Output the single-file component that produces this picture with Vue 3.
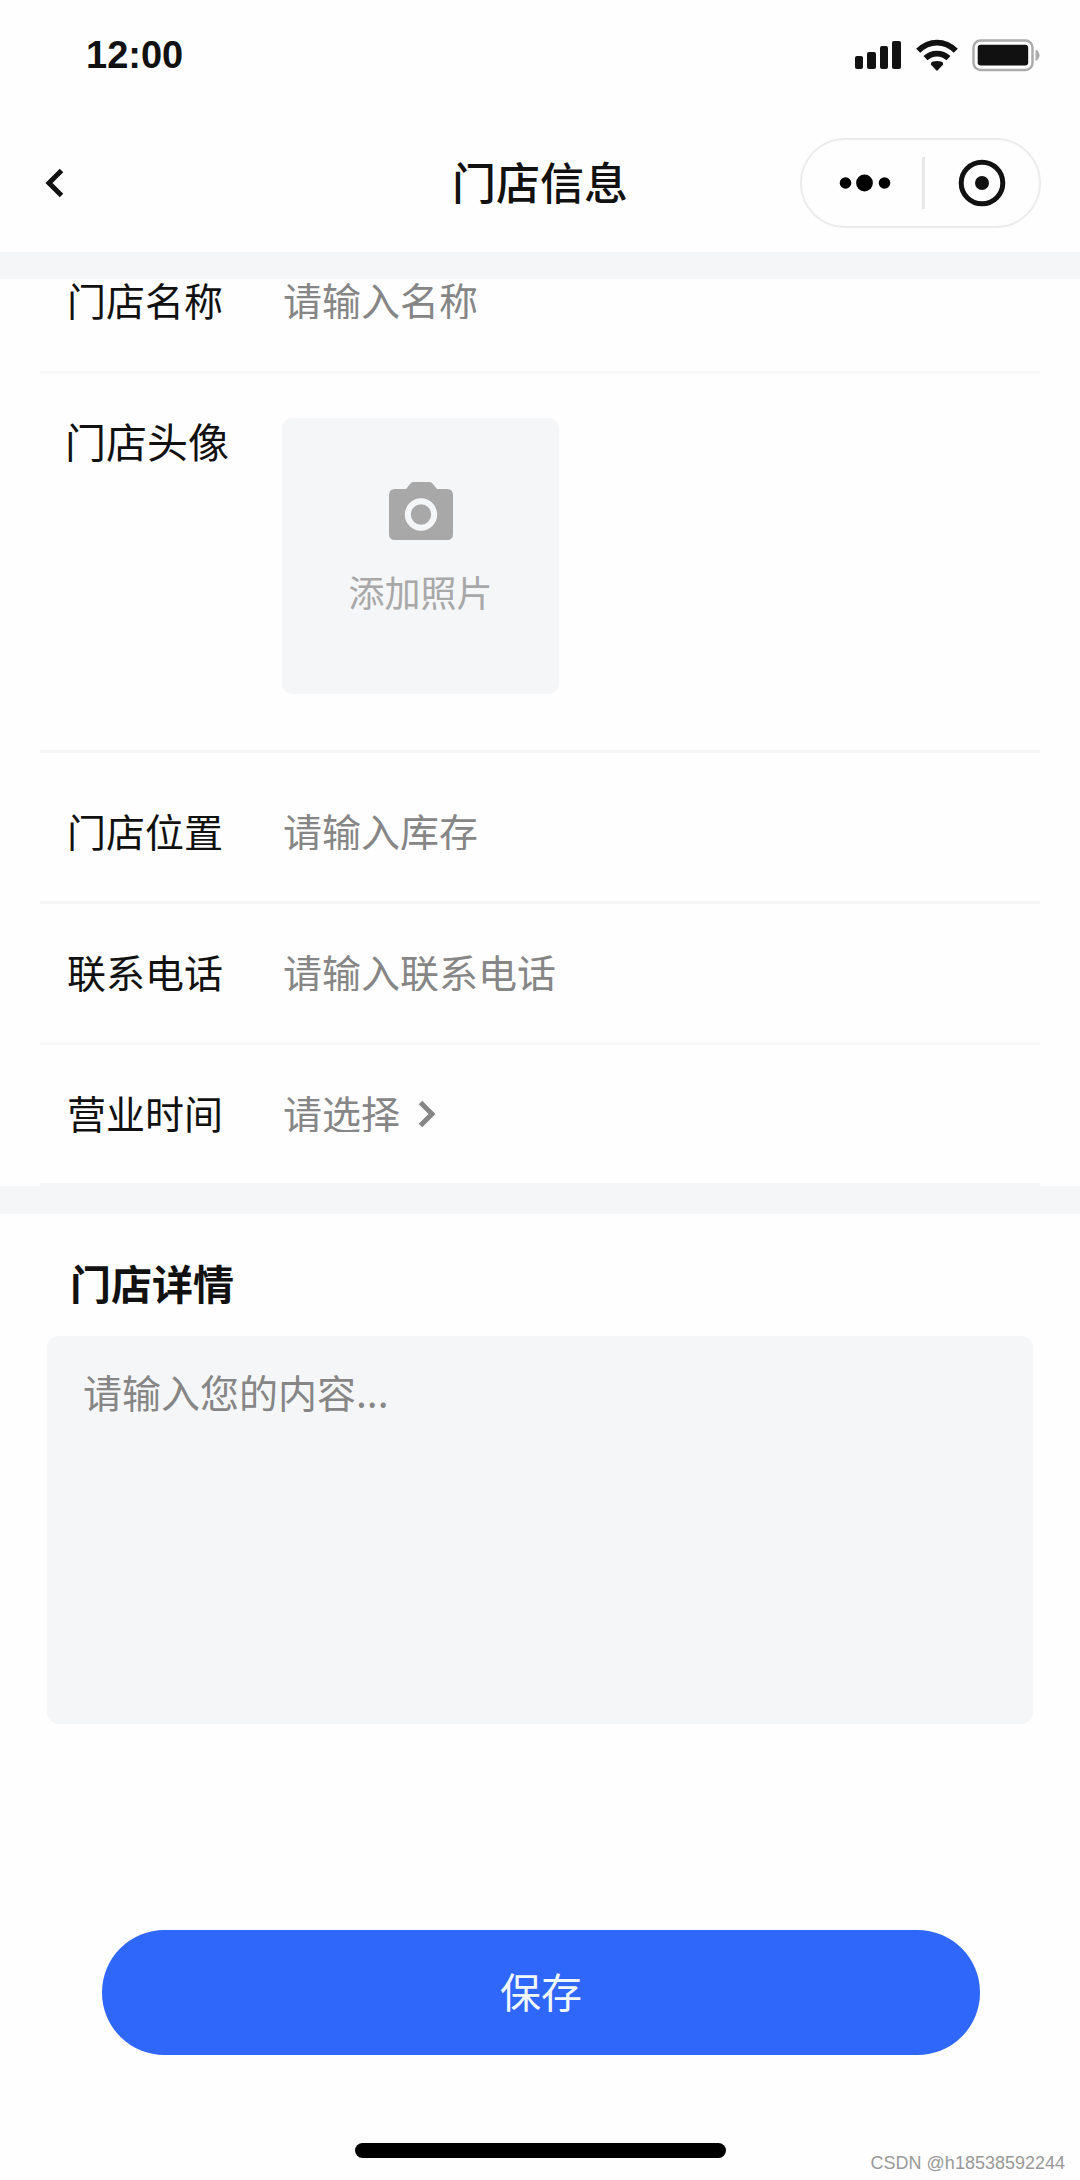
<script setup>
import { reactive } from 'vue'

const form = reactive({
  name: '',
  location: '',
  phone: '',
  hours: '',
  detail: '',
})
</script>

<template>
  <div class="page">
    <div class="status-bar">
      <span class="time">12:00</span>
      <svg class="status-icons" width="186" height="36" viewBox="0 0 186 36" aria-hidden="true">
        <g fill="#111">
          <rect x="1" y="19" width="8" height="13" rx="2" />
          <rect x="13" y="15" width="9" height="17" rx="2" />
          <rect x="26" y="9" width="8" height="23" rx="2" />
          <rect x="38" y="4" width="9" height="28" rx="2" />
          <path d="M83 34 L76.800 27.500 Q76.600 25 79 24.400 Q83 23.400 87 24.400 Q89.400 25 89.200 27.500 Z" />
        </g>
        <g fill="none" stroke="#111" stroke-width="5.800">
          <path d="M64.200 13.800 Q72.500 5.600 83 5.600 Q93.500 5.600 101.800 13.800" />
          <path d="M71.500 21.200 Q76.500 16.600 83 16.600 Q89.500 16.600 94.500 21.200" />
        </g>
        <rect x="119.500" y="3.500" width="59" height="29.500" rx="7" fill="none" stroke="#acacac" stroke-width="2.500" />
        <rect x="123.700" y="7.800" width="50.500" height="20.700" rx="3" fill="#111" />
        <path d="M181.500 12.500 Q185.500 14.500 185.500 18.200 Q185.500 22 181.500 24 Z" fill="#acacac" />
      </svg>
    </div>

    <header class="nav">
      <button class="back" type="button" aria-label="返回">
        <svg width="20" height="30" viewBox="0 0 20 30" aria-hidden="true">
          <path d="M16.500 2.500 L4 15 L16.500 27.500" fill="none" stroke="#111" stroke-width="5" />
        </svg>
      </button>
      <h1 class="title">门店信息</h1>
      <div class="capsule">
        <button class="more" type="button" aria-label="更多">
          <svg width="52" height="18" viewBox="0 0 52 18" aria-hidden="true">
            <circle cx="6.500" cy="9" r="5.800" />
            <circle cx="25.500" cy="9" r="8.400" />
            <circle cx="45.500" cy="9" r="5.800" />
          </svg>
        </button>
        <span class="divider"></span>
        <button type="button" aria-label="关闭">
          <svg width="48" height="48" viewBox="0 0 48 48" aria-hidden="true">
            <circle cx="24" cy="24" r="20.800" fill="none" stroke="#111" stroke-width="5" />
            <circle cx="24" cy="24" r="7" fill="#111" />
          </svg>
        </button>
      </div>
    </header>

    <form @submit.prevent>
      <section class="fields">
        <div class="row row-first">
          <label for="name">门店名称</label>
          <input id="name" v-model="form.name" type="text" placeholder="请输入名称" />
        </div>
        <div class="row row-photo">
          <span class="photo-label">门店头像</span>
          <button class="photo" type="button">
            <svg width="64" height="58" viewBox="0 0 64 58" aria-hidden="true">
              <path d="M6 7 H17 L21.500 1.500 Q22.500 0 24.500 0 H40.500 Q42.500 0 43.500 1.500 L48 7 H58 Q64 7 64 13 V52 Q64 58 58 58 H6 Q0 58 0 52 V13 Q0 7 6 7 Z" fill="#a8a8a8" />
              <circle cx="32" cy="32.500" r="13.200" fill="none" stroke="#f5f6f8" stroke-width="6" />
            </svg>
            <span>添加照片</span>
          </button>
        </div>
        <div class="row row-location">
          <label for="location">门店位置</label>
          <input id="location" v-model="form.location" type="text" placeholder="请输入库存" />
        </div>
        <div class="row">
          <label for="phone">联系电话</label>
          <input id="phone" v-model="form.phone" type="tel" placeholder="请输入联系电话" />
        </div>
        <div class="row">
          <label for="hours">营业时间</label>
          <select id="hours" v-model="form.hours">
            <option value="">请选择</option>
          </select>
          <svg class="chevron" width="20" height="28" viewBox="0 0 20 28" aria-hidden="true">
            <path d="M3.500 2.500 L15 14 L3.500 25.500" fill="none" stroke="#868686" stroke-width="5" />
          </svg>
        </div>
      </section>

      <section class="detail">
        <label for="detail">门店详情</label>
        <textarea id="detail" v-model="form.detail" placeholder="请输入您的内容..."></textarea>
      </section>

      <button class="save" type="submit">保存</button>
    </form>

    <div class="home-indicator"></div>
    <span class="watermark">CSDN @h18538592244</span>
  </div>
</template>

<style>
body {
  background: #fefefe;
}
</style>

<style scoped>
.page {
  position: relative;
  padding-bottom: 21px;
  background: #fefefe;
  color: #111;
  font-family: "Noto Sans CJK SC", sans-serif;
  font-size: 39px;
  line-height: 40px;
}

.page * {
  box-sizing: border-box;
}

button,
input,
select,
textarea {
  margin: 0;
  padding: 0;
  border: 0;
  outline: 0;
  border-radius: 0;
  background: none;
  color: inherit;
  font: inherit;
}

button {
  cursor: pointer;
}

svg {
  display: block;
}

.status-bar {
  display: flex;
  align-items: center;
  justify-content: space-between;
  height: 110px;
  padding: 0 40px 0 86px;
}

.time {
  font-family: "Liberation Sans", sans-serif;
  font-size: 38px;
  font-weight: 700;
}

.nav {
  display: grid;
  grid-template-columns: 1fr auto 1fr;
  align-items: center;
  padding: 28px 39px 24px;
}

.back {
  justify-self: start;
  padding-left: 6px;
}

.title {
  margin: 0;
  padding-bottom: 4px;
  font-size: 44px;
  font-weight: 500;
}

.capsule {
  display: flex;
  align-items: center;
  justify-self: end;
  width: 241px;
  height: 90px;
  border: 2px solid #ececec;
  border-radius: 45px;
}

.capsule button {
  display: flex;
  flex: 1;
  justify-content: center;
}

.capsule .more {
  padding-left: 6px;
}

.divider {
  width: 3px;
  height: 52px;
  background: #e8e8e8;
}

.fields {
  padding: 0 40px;
  border-top: 27px solid #f5f6f8;
  border-bottom: 28px solid #f5f6f8;
}

.row {
  display: flex;
  align-items: center;
  padding: 47px 0 51px 27px;
  border-bottom: 3px solid #f6f6f7;
}

.row label,
.photo-label {
  flex: none;
  width: 216px;
}

.row input,
.row select {
  height: 40px;
}

.row input {
  flex: 1;
  min-width: 0;
}

.row-first {
  padding-top: 0;
  padding-bottom: 52px;
}

.row-photo {
  align-items: flex-start;
  padding: 44px 0 56px 25px;
}

.photo-label {
  width: 217px;
  font-size: 41px;
  line-height: 44px;
}

.photo {
  display: flex;
  flex-direction: column;
  align-items: center;
  gap: 31px;
  width: 277px;
  height: 276px;
  padding-top: 64px;
  border-radius: 10px;
  background: #f5f6f8;
  color: #a8a8a8;
  font-size: 36px;
}

.row-location {
  padding-top: 57px;
}

.row select {
  appearance: none;
  color: #868686;
}

.chevron {
  margin: 4px 0 0 16px;
}

input::placeholder,
textarea::placeholder {
  color: #868686;
  opacity: 1;
}

.detail {
  padding: 48px 47px 0;
}

.detail label {
  display: block;
  margin: 0 0 34px 23px;
  font-size: 41px;
  font-weight: 700;
}

.detail textarea {
  display: block;
  width: 100%;
  height: 388px;
  padding: 35px 36px;
  border-radius: 12px;
  background: #f5f6f8;
  resize: none;
}

.save {
  display: block;
  width: calc(100% - 202px);
  height: 125px;
  margin: 206px 100px 88px 102px;
  padding-bottom: 6px;
  border-radius: 63px;
  background: #2e67fa;
  color: #f0f8ff;
  font-size: 41px;
}

.home-indicator {
  width: 371px;
  height: 15px;
  margin: 0 auto;
  border-radius: 8px;
  background: #000;
}

.watermark {
  position: absolute;
  right: 15px;
  bottom: 6px;
  color: #999;
  font-family: "Liberation Sans", sans-serif;
  font-size: 18px;
  line-height: 20px;
}
</style>
